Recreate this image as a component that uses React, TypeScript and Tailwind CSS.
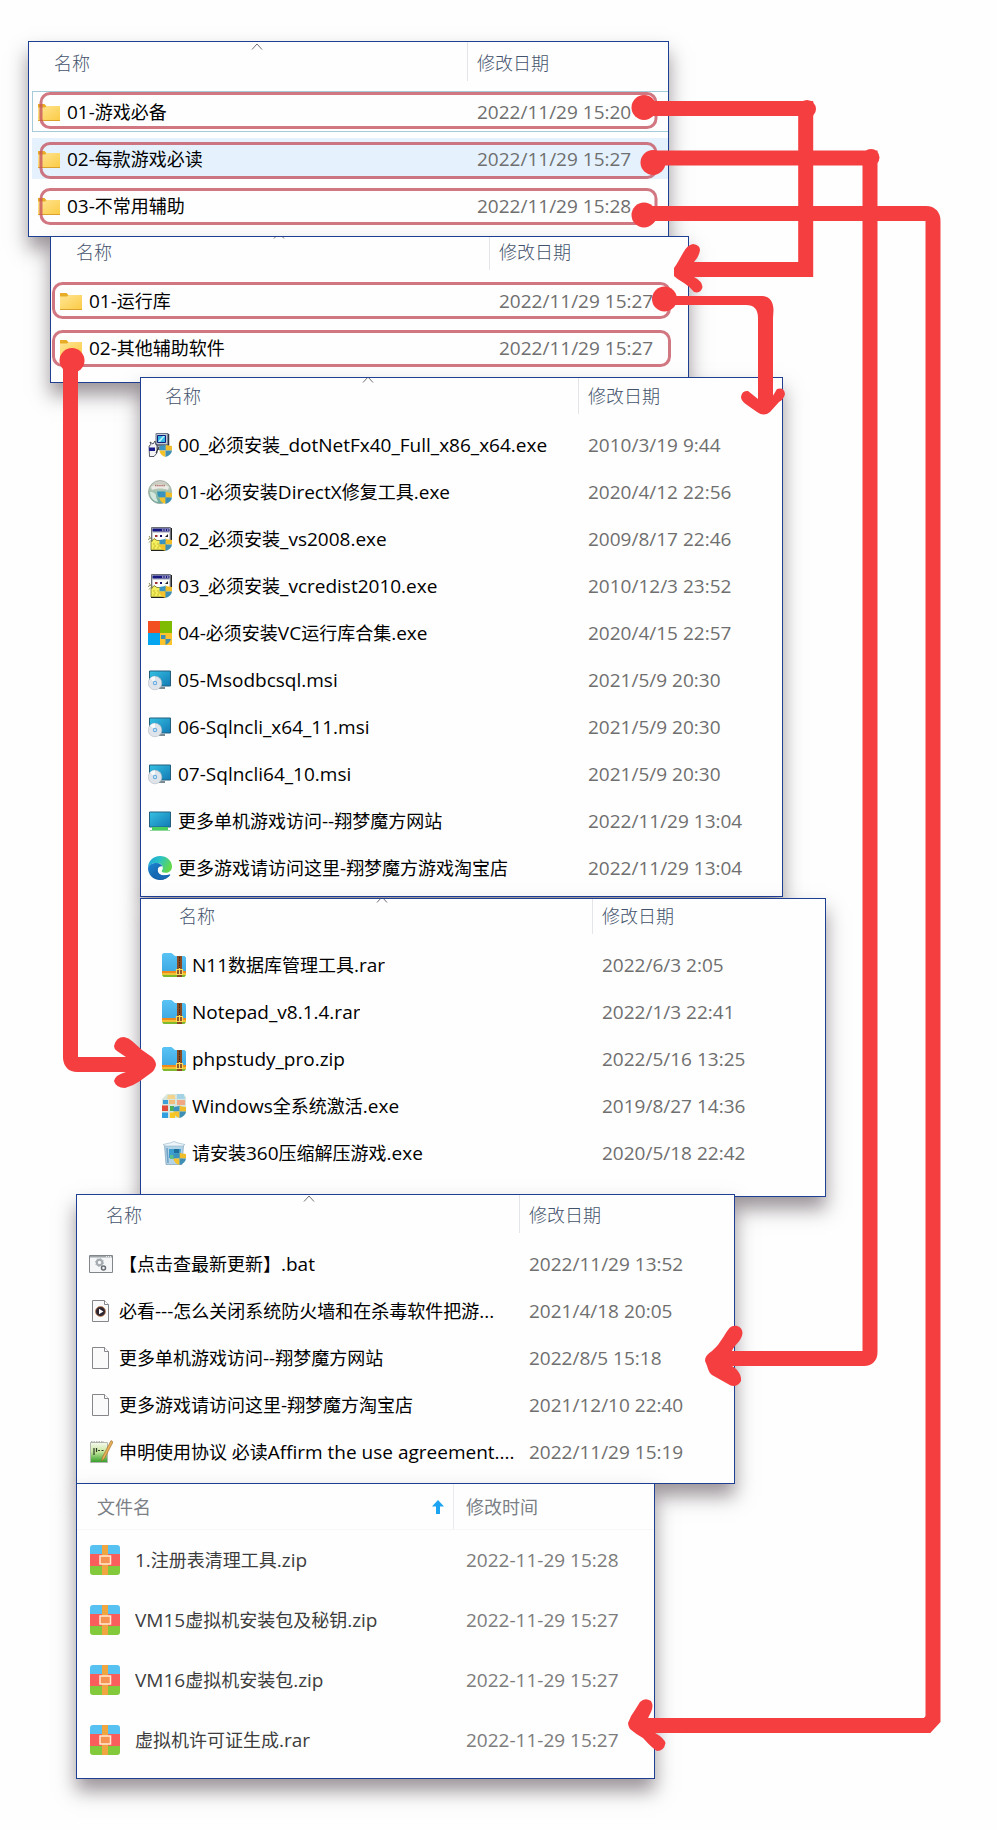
import clsx from "clsx";
import type { ReactNode } from "react";

type FileItem = {
  name: string;
  date: string;
  icon: ReactNode;
  state?: "focused" | "hovered";
};

type WindowProps = {
  items: FileItem[];
  className: string;
  headClassName: string;
  rowClassName: string;
};

function Shield() {
  return (
    <g>
      <path d="M17.500 11.500c2 1 4 1.400 6.500 1.400v4.600h-6.500z" fill="#f0bd2a" />
      <path d="M17.500 11.500c-2 1-3.500 1.400-6 1.400v4.600h6z" fill="#3a93c0" />
      <path d="M11.500 17.500h6V24c-3.600-1.200-5.800-3.300-6-6.500z" fill="#f5c22b" />
      <path d="M24 17.500h-6.500V24c3.600-1.200 6.200-3.300 6.500-6.500z" fill="#3f8fb5" />
    </g>
  );
}

function FolderIcon() {
  return (
    <svg viewBox="0 0 24 24" className="size-6">
      <defs>
        <linearGradient id="folder" x1="0" y1="0" x2="1" y2="1">
          <stop offset="0" stopColor="#ffe594" />
          <stop offset="1" stopColor="#fbcb45" />
        </linearGradient>
      </defs>
      <path d="M1 4h6.500l1.800 2H23v5H1z" fill="#e9ac27" />
      <path d="M1 7.500h7L9.500 6H23v14.500H1z" fill="url(#folder)" />
      <path d="M1 20h22v1H1z" fill="#dba32e" />
    </svg>
  );
}

function SetupIcon() {
  return (
    <svg viewBox="0 0 24 24" className="size-6">
      <path d="M8 .5h12v11H8z" fill="#c4cbd6" stroke="#6c7686" />
      <path d="M20.500 1v11" stroke="#2f3747" strokeWidth="1.500" />
      <path d="M9.500 2.500h8v7h-8z" fill="#35b5e6" stroke="#10207a" />
      <path d="M10 8.500l5-5.500h2l-5 6z" fill="#b6f0f7" />
      <path d="M9 12.500h12v4H9z" fill="#a7aebb" stroke="#4f5766" strokeWidth=".8" />
      <path d="M1 13l2-1.500L2 9l3 2 2-3 1 4h1v8l-3 3.500H1.500z" fill="#f3f3f6" stroke="#2c3040" strokeWidth=".8" />
      <path d="M1 14.500h6V18H1z" fill="#1b1c8c" />
      <path d="M8 20l3-6" stroke="#222" />
      <Shield />
    </svg>
  );
}

function DirectXIcon() {
  return (
    <svg viewBox="0 0 24 24" className="size-6">
      <defs>
        <linearGradient id="globe" x1="0" y1="0" x2="0" y2="1">
          <stop offset="0" stopColor="#d5d2ca" />
          <stop offset=".35" stopColor="#b4c9b6" />
          <stop offset="1" stopColor="#62a99c" />
        </linearGradient>
      </defs>
      <circle cx="12" cy="12" r="11.500" fill="url(#globe)" stroke="#9aa49b" strokeWidth=".8" />
      <path d="M3 7c5-4 13-4 18 0l-1 3c-5-2-11-2-16 0z" fill="#eceae4" />
      <path d="M7 5.500h10" stroke="#b0706c" strokeWidth="1.500" strokeDasharray="1.500 .6" />
      <path d="M2 12c4 0 6 2 6 4s1 3 2 6c-5-1-8-5-8-10z" fill="#d5e8dd" />
      <path d="M9 11.500h8l-3 6-4-1z" fill="#2f93b4" />
      <Shield />
    </svg>
  );
}

function InstallerIcon() {
  return (
    <svg viewBox="0 0 24 24" className="size-6">
      <path d="M3.500.5h19v14h-19z" fill="#c9ccd0" stroke="#6b7078" />
      <path d="M23.500 1v14" stroke="#222" />
      <path d="M4.500 1.500h17v3h-17z" fill="#14157e" />
      <path d="M14 3h1.500m1 0H18m1 0h1.500" stroke="#fff" />
      <path d="M5 6h16v8H5z" fill="#fdfdfd" />
      <path d="M7 8h2.500v2H7z" fill="#a03030" />
      <path d="M12 8h2v2h-2z" fill="#12126e" />
      <path d="M17 10l3-3v3z" fill="#222" />
      <path d="M0 12.500l2-1m-1 4 3-3M1 9l2 3" stroke="#8a8c4a" />
      <path d="M3 15.500l3-4 3 2h9v9.500H3z" fill="#f2ee5e" stroke="#76751e" strokeWidth=".8" />
      <path d="M5 17h2m2 0h2m-5 2h2m2 0h2m-7 2h2m2 0h2" stroke="#c9b92b" />
      <path d="M3 23.500h14" stroke="#222" />
      <Shield />
    </svg>
  );
}

function WindowsIcon() {
  return (
    <svg viewBox="0 0 24 24" className="size-6">
      <path d="M0 0h12v12H0z" fill="#f35022" />
      <path d="M12 0h12v12H12z" fill="#80bb03" />
      <path d="M0 12h12v12H0z" fill="#05a5f0" />
      <path d="M12 12h12v12H12z" fill="#ffc42b" />
      <path d="M13 14h4.500v4H13zM17.500 18H23c-1 3-3 5-5.500 6z" fill="#3f8fb5" />
    </svg>
  );
}

function Screen() {
  return (
    <>
      <defs>
        <linearGradient id="screen" x1="0" y1="0" x2="1" y2="1">
          <stop offset="0" stopColor="#35c1e3" />
          <stop offset="1" stopColor="#1279b4" />
        </linearGradient>
      </defs>
      <path d="M1.500 3h21v15h-21z" fill="url(#screen)" stroke="#24607e" />
    </>
  );
}

function MsiIcon() {
  return (
    <svg viewBox="0 0 24 24" className="size-6">
      <Screen />
      <path d="M11 20h6" stroke="#4f6470" strokeWidth="1.500" />
      <circle cx="7" cy="15" r="6.800" fill="#dfe3ea" stroke="#b3bac3" strokeWidth=".6" />
      <path d="M7 15 2 10.500A7 7 0 0 1 7 8.300z" fill="#f7f9fb" />
      <circle cx="7" cy="15" r="2.200" fill="#6aaee0" />
      <circle cx="7" cy="15" r="1" fill="#e9f4fb" />
    </svg>
  );
}

function ShortcutIcon() {
  return (
    <svg viewBox="0 0 24 24" className="size-6">
      <Screen />
      <path d="M4 18h16v4H4z" fill="#48cf5f" />
      <path d="M2 21.500h20" stroke="#8fd79a" />
    </svg>
  );
}

function EdgeIcon() {
  return (
    <svg viewBox="0 0 24 24" className="size-6">
      <defs>
        <linearGradient id="edge-top" x1="0" y1="0" x2="1" y2=".4">
          <stop offset="0" stopColor="#1c9de0" />
          <stop offset=".5" stopColor="#2bc3c4" />
          <stop offset="1" stopColor="#62d84e" />
        </linearGradient>
        <linearGradient id="edge-low" x1="0" y1="0" x2="1" y2="1">
          <stop offset="0" stopColor="#1b87d6" />
          <stop offset="1" stopColor="#114a8b" />
        </linearGradient>
      </defs>
      <path
        d="M0 12C0 5 5 0 12 0s12 5 12 10.500c0 4-3 6.300-6.500 6.300-3 0-4-1-3.700-2 .2-.7 1-1.200 1-3 0-2.500-2.300-4.800-6-4.800C4 7 1 9 0 12z"
        fill="url(#edge-top)"
      />
      <path
        d="M0 12c1-3.500 4-5 8.800-5 3 0 5.200 1.800 5.800 3.700-1-.9-4.600-.5-5 3.300-.3 4 4 7.500 12.400 4.500-2 3.500-5.500 5.500-10 5.500C5 24 0 18.500 0 12z"
        fill="url(#edge-low)"
      />
      <path d="M9.700 13c-.7 4 3.300 8 11.800 5.500.7-.2 1.100.3.700.8C19 23.300 13 24.500 9 22.700 5.500 20 5.500 15 9.700 13z" fill="#1769b4" />
    </svg>
  );
}

function ArchiveFolderIcon() {
  return (
    <svg viewBox="0 0 24 24" className="size-6">
      <defs>
        <linearGradient id="archive" x1="0" y1="0" x2="0" y2="1">
          <stop offset="0" stopColor="#59c3f5" />
          <stop offset="1" stopColor="#3aa5e0" />
        </linearGradient>
      </defs>
      <path d="M1.500 0h8L13 3h9.500L24 4.500V22H0V1.500z" fill="url(#archive)" />
      <path d="M0 18h24v2H0z" fill="#f08a1d" />
      <path d="M0 20h24v2H0z" fill="#f3c234" />
      <path d="M0 22h24l-1.500 2h-21z" fill="#7fb92e" />
      <path d="M15 3h5v21h-5z" fill="#8a4a22" />
      <path d="M17.500 4v12" stroke="#3d2416" strokeDasharray="1.500 1" />
      <path d="M14.500 16.500h6v5h-6zM17.500 15v6" fill="none" stroke="#ffd95a" strokeWidth="1.200" />
    </svg>
  );
}

function ActivatorIcon() {
  return (
    <svg viewBox="0 0 24 24" className="size-6">
      <path d="M5 0h16l3 3v16l-5 5H0V5z" fill="#d7e6dc" />
      <path d="M6 1h7v4H5z" fill="#f3d48a" />
      <path d="M15 0h7l1 5h-8z" fill="#a3d3e4" />
      <path d="M1 6h5v4H1z" fill="#3f9fd9" />
      <path d="M7 6h6v4H7z" fill="#f3bd7a" />
      <path d="M15 6h8v5h-8z" fill="#f0a884" />
      <path d="M0 11.500h6V17H0z" fill="#e24a3a" />
      <path d="M8 12h4v5H8z" fill="#4faf56" />
      <path d="M0 18.500h6V24H0z" fill="#2f9fe0" />
      <path d="M8 18.500h5V24H8z" fill="#f7c81f" />
      <Shield />
    </svg>
  );
}

function CompressIcon() {
  return (
    <svg viewBox="0 0 24 24" className="size-6">
      <path d="M2.500 4h19L20 23.500H4z" fill="#b3d3e6" stroke="#7c9fb8" strokeWidth=".7" />
      <path d="M1 3.500 8 2l4-1.500L16 2l7 1.500L21 5H3z" fill="#eef5f9" stroke="#93b4c7" strokeWidth=".6" />
      <path d="M7 8h12l-1 9H7z" fill="#3d9fd0" />
      <path d="M12 8h5v4h-5z" fill="#1d6f9c" />
      <path d="M8 14h5v4H8z" fill="#5cbf8c" />
      <path d="M5 7l1 15" stroke="#6f9fc4" strokeWidth="1.500" />
      <Shield />
    </svg>
  );
}

function BatIcon() {
  return (
    <svg viewBox="0 0 24 24" className="size-6">
      <path d="M.5 3.500h23v17H.5z" fill="#f5f6f7" stroke="#82868b" />
      <path d="M1 4h22v1.500H1z" fill="#9fa4a9" />
      <path d="M17 4.700h5" stroke="#fff" strokeDasharray="1 1" />
      <circle cx="10.500" cy="10.500" r="2.700" fill="none" stroke="#a4abb1" strokeWidth="2" />
      <circle cx="10.500" cy="10.500" r="4" fill="none" stroke="#a4abb1" strokeDasharray="1.500 1.600" />
      <circle cx="14.500" cy="16" r="2" fill="none" stroke="#676d73" strokeWidth="1.500" />
    </svg>
  );
}

function PageIcon({ children }: { children?: ReactNode }) {
  return (
    <svg viewBox="0 0 24 24" className="size-6">
      <path d="M3.500 1.500h12l4 4v17h-16z" fill="#fafafa" stroke="#84868a" />
      <path d="M15.500 1.500v4h4" fill="#fff" stroke="#84868a" />
      {children}
    </svg>
  );
}

function VideoIcon() {
  return (
    <PageIcon>
      <circle cx="11.500" cy="12.500" r="5" fill="#2d2530" stroke="#c98659" strokeWidth=".8" />
      <path d="M10 9.800v5.400l4.400-2.700z" fill="#fff" />
    </PageIcon>
  );
}

function NotepadIcon() {
  return (
    <svg viewBox="0 0 24 24" className="size-6">
      <defs>
        <linearGradient id="note" x1="0" y1="0" x2="0" y2="1">
          <stop offset="0" stopColor="#f6f8ee" />
          <stop offset=".45" stopColor="#c9e8a0" />
          <stop offset="1" stopColor="#2f9c27" />
        </linearGradient>
      </defs>
      <path d="M1.500 2.500h17v20h-17z" fill="url(#note)" stroke="#b3b8b0" />
      <path d="M2 2h13" stroke="#a5a9a3" strokeWidth="1.500" strokeDasharray="1.500 1" />
      <path d="M5 8v7M7.500 8v4M9 10.500h2m1.500 0h2" stroke="#2c3a24" strokeWidth="1.200" />
      <path d="M22 .5 13.500 17l-1 4 3-2.500L24 2z" fill="#e8b05a" stroke="#9a6a22" strokeWidth=".6" />
    </svg>
  );
}

function ZipIcon() {
  return (
    <svg viewBox="0 0 30 30" className="size-[30px]">
      <path d="M3 0h24a3 3 0 0 1 3 3v6H0V3a3 3 0 0 1 3-3z" fill="#57c1f2" />
      <path d="M0 9h30v12H0z" fill="#fa5e5c" />
      <path d="M0 21h30v6a3 3 0 0 1-3 3H3a3 3 0 0 1-3-3z" fill="#82c93c" />
      <path d="M12 0h6v30h-6z" fill="#f0a640" />
      <path d="M10 11h10.500v8H10z" fill="#f79352" stroke="#ffe9d2" strokeWidth="1.500" />
    </svg>
  );
}

const rootFiles: FileItem[] = [
  { name: "01-游戏必备", date: "2022/11/29 15:20", icon: <FolderIcon />, state: "focused" },
  { name: "02-每款游戏必读", date: "2022/11/29 15:27", icon: <FolderIcon />, state: "hovered" },
  { name: "03-不常用辅助", date: "2022/11/29 15:28", icon: <FolderIcon /> },
];

const essentialFiles: FileItem[] = [
  { name: "01-运行库", date: "2022/11/29 15:27", icon: <FolderIcon /> },
  { name: "02-其他辅助软件", date: "2022/11/29 15:27", icon: <FolderIcon /> },
];

const runtimeFiles: FileItem[] = [
  { name: "00_必须安装_dotNetFx40_Full_x86_x64.exe", date: "2010/3/19 9:44", icon: <SetupIcon /> },
  { name: "01-必须安装DirectX修复工具.exe", date: "2020/4/12 22:56", icon: <DirectXIcon /> },
  { name: "02_必须安装_vs2008.exe", date: "2009/8/17 22:46", icon: <InstallerIcon /> },
  { name: "03_必须安装_vcredist2010.exe", date: "2010/12/3 23:52", icon: <InstallerIcon /> },
  { name: "04-必须安装VC运行库合集.exe", date: "2020/4/15 22:57", icon: <WindowsIcon /> },
  { name: "05-Msodbcsql.msi", date: "2021/5/9 20:30", icon: <MsiIcon /> },
  { name: "06-Sqlncli_x64_11.msi", date: "2021/5/9 20:30", icon: <MsiIcon /> },
  { name: "07-Sqlncli64_10.msi", date: "2021/5/9 20:30", icon: <MsiIcon /> },
  { name: "更多单机游戏访问--翔梦魔方网站", date: "2022/11/29 13:04", icon: <ShortcutIcon /> },
  { name: "更多游戏请访问这里-翔梦魔方游戏淘宝店", date: "2022/11/29 13:04", icon: <EdgeIcon /> },
];

const toolFiles: FileItem[] = [
  { name: "N11数据库管理工具.rar", date: "2022/6/3 2:05", icon: <ArchiveFolderIcon /> },
  { name: "Notepad_v8.1.4.rar", date: "2022/1/3 22:41", icon: <ArchiveFolderIcon /> },
  { name: "phpstudy_pro.zip", date: "2022/5/16 13:25", icon: <ArchiveFolderIcon /> },
  { name: "Windows全系统激活.exe", date: "2019/8/27 14:36", icon: <ActivatorIcon /> },
  { name: "请安装360压缩解压游戏.exe", date: "2020/5/18 22:42", icon: <CompressIcon /> },
];

const readmeFiles: FileItem[] = [
  { name: "【点击查最新更新】.bat", date: "2022/11/29 13:52", icon: <BatIcon /> },
  { name: "必看---怎么关闭系统防火墙和在杀毒软件把游...", date: "2021/4/18 20:05", icon: <VideoIcon /> },
  { name: "更多单机游戏访问--翔梦魔方网站", date: "2022/8/5 15:18", icon: <PageIcon /> },
  { name: "更多游戏请访问这里-翔梦魔方淘宝店", date: "2021/12/10 22:40", icon: <PageIcon /> },
  { name: "申明使用协议 必读Affirm the use agreement....", date: "2022/11/29 15:19", icon: <NotepadIcon /> },
];

const rareFiles: FileItem[] = [
  { name: "1.注册表清理工具.zip", date: "2022-11-29 15:28", icon: <ZipIcon /> },
  { name: "VM15虚拟机安装包及秘钥.zip", date: "2022-11-29 15:27", icon: <ZipIcon /> },
  { name: "VM16虚拟机安装包.zip", date: "2022-11-29 15:27", icon: <ZipIcon /> },
  { name: "虚拟机许可证生成.rar", date: "2022-11-29 15:27", icon: <ZipIcon /> },
];

const windowClassName =
  "relative w-full border border-[#1f3f93] bg-[#fefefe] shadow-[0_12px_18px_rgba(60,45,55,0.5)]";

// Latin runs are set one pixel larger than the Chinese around them.
function FileName({ name }: { name: string }) {
  const parts = name.split(/([\x21-\x7e][\x20-\x7e]*)/).filter(Boolean);

  return (
    <span className="truncate whitespace-pre">
      {parts.map((part, index) =>
        /^[\x21-\x7e]/.test(part) ? (
          <span key={index} className="text-[19px]">
            {part}
          </span>
        ) : (
          part
        ),
      )}
    </span>
  );
}

function ExplorerWindow({ items, className, headClassName, rowClassName }: WindowProps) {
  return (
    <section className={clsx(windowClassName, className)}>
      <table className="block">
        <thead className={clsx("flex flex-col justify-end overflow-hidden", headClassName)}>
          <tr className={clsx("flex h-[49px] shrink-0 text-left text-[18px] leading-[42px] text-[#44536c]", rowClassName)}>
            <th className="relative ml-[9px] h-[39px] w-[422px] border-r border-[#e3e5e8] pl-2 font-light">
              名称
              <svg viewBox="0 0 12 7" className="absolute inset-x-0 top-[1px] mx-auto h-[7px] w-3">
                <path d="M1 6.500 6 1l5 5.500" fill="none" stroke="#6b6f76" />
              </svg>
            </th>
            <th className="pl-[9px] font-light">修改日期</th>
          </tr>
        </thead>
        <tbody className="flex flex-col gap-[6px]">
          {items.map((item) => (
            <tr
              key={item.name}
              className={clsx(
                "relative flex h-[41px] items-center leading-6",
                rowClassName,
                item.state === "focused" && "shadow-[inset_0_1px_#a5cbd9,inset_0_-1px_#a5cbd9,inset_1px_0_#a5cbd9]",
                item.state === "hovered" && "bg-[#e5f2fd]",
              )}
            >
              <td className="flex w-[440px] items-center gap-[6px] text-[18px] text-black">
                <span className="size-6 shrink-0">{item.icon}</span>
                <FileName name={item.name} />
              </td>
              <td className="text-[19px] whitespace-nowrap text-[#6f6f6f]">{item.date}</td>
            </tr>
          ))}
        </tbody>
      </table>
    </section>
  );
}

function ArchiveWindow({ items }: { items: FileItem[] }) {
  return (
    <section className={clsx(windowClassName, "-mt-px ml-[76px] max-w-[579px] pb-2")}>
      <table className="block">
        <thead className="block">
          <tr className="flex h-[46px] border-b border-[#f7f7f8] text-left text-[18px] leading-[46px] text-[#7b7f86]">
            <th className="flex w-[377px] items-center justify-between border-r border-[#e9ebee] pr-[9px] pl-5 font-normal">
              文件名
              <svg viewBox="0 0 12 14" className="h-[14px] w-3">
                <path d="M6 0l6 6.500H8V14H4V6.500H0z" fill="#1ca4f2" />
              </svg>
            </th>
            <th className="pl-3 font-normal">修改时间</th>
          </tr>
        </thead>
        <tbody className="block">
          {items.map((item) => (
            <tr key={item.name} className="flex h-[60px] items-center pl-[13px] leading-6">
              <td className="flex w-[376px] items-center gap-[15px] text-[18px] text-[#3d3d3d]">
                <span className="shrink-0">{item.icon}</span>
                <FileName name={item.name} />
              </td>
              <td className="text-[19px] whitespace-nowrap text-[#7c7c7c]">{item.date}</td>
            </tr>
          ))}
        </tbody>
      </table>
    </section>
  );
}

function Annotations() {
  return (
    <svg
      viewBox="0 0 997 1830"
      className="pointer-events-none absolute top-0 left-0 h-[1830px] w-[997px] max-w-none"
      aria-hidden="true"
    >
      <g fill="none" stroke="#c4515f" strokeOpacity=".78" strokeWidth="3">
        <rect x="41" y="93.500" width="615" height="34" rx="9" />
        <rect x="41" y="143.500" width="615" height="34" rx="9" />
        <rect x="41" y="189.500" width="615" height="34" rx="9" />
        <rect x="53.500" y="283.500" width="616" height="34" rx="9" />
        <rect x="53.500" y="331.500" width="616" height="34" rx="9" />
      </g>
      <g fill="#f43e40">
        <circle cx="644" cy="107.500" r="12.500" />
        <circle cx="653" cy="162.500" r="12.500" />
        <circle cx="644" cy="215" r="12.500" />
        <circle cx="664.500" cy="299" r="12.500" />
        <circle cx="72" cy="360.500" r="12.500" />
        <circle cx="807" cy="109" r="9" />
        <circle cx="871" cy="157.500" r="8.500" />
      </g>
      <g fill="none" stroke="#f43e40" strokeWidth="15">
        <path d="M644 108.500H805.700V269.500H688" />
        <path d="M653 158H870V1352Q870 1358.500 864 1358.500H720" />
        <path d="M644 213.500H926Q933 213.500 933 221V1719L927 1725.500H640" />
        <path d="M765.500 310V404" />
        <path d="M70.500 360V1058Q71 1064.500 77 1064.500H140" />
      </g>
      <path d="M664 296H763Q773 297 773.500 310L773 318H758Q758 305 746 305H664z" fill="#f43e40" />
      {/* arrow heads */}
      <g fill="#f43e40">
        <path d="M674 276V268C677 264 680 258 683 253Q687 245 693 244Q700 245 700 250Q699 257 694 262V277Q702 281 702.500 287Q701 294 694 292Q689 286 684 283Q677 279 674 276z" />
        <path d="M728 1330C731 1324 742 1324 742.500 1333C742 1341 734 1345 732 1351V1366C736 1368 742 1374 741 1381C738 1387 732 1387 728 1384L712 1375C708 1372 708 1367 705 1361C705 1354 712 1352 714 1349C720 1344 724 1335 728 1330z" />
        <path d="M628 1723Q631 1715 635 1710L640 1702Q645 1697 651 1701Q654 1706 651 1712L648 1718V1733H655Q664 1738 665.500 1743Q664 1751 657 1751Q652 1748 643 1738Q637 1735 630 1729Q628 1726 628 1723z" />
        <path d="M741 397Q742 390 748 391L758 399H771L777 389Q784 387 785 394Q784 399 779 402L770 412Q764 417 757 412L747 405Q741 401 741 397z" />
        <path d="M114 1046Q116 1037 124 1037Q129 1038 132 1041L142 1050L152 1057Q156 1061 156 1065Q155 1070 151 1073L140 1081Q133 1086 125 1088Q116 1088 114 1081Q115 1075 126 1072V1057L117 1051Q114 1049 114 1046z" />
      </g>
    </svg>
  );
}

export default function App() {
  return (
    <main className="relative flow-root overflow-hidden bg-[#fefefe] pt-[41px] pb-[51px] font-['Open_Sans','Noto_Sans_CJK_SC',sans-serif]">
      <ExplorerWindow
        items={rootFiles}
        className="ml-7 max-w-[641px] pb-[10px]"
        headClassName="h-[49px]"
        rowClassName="ml-[3px] pl-[5px]"
      />
      <ExplorerWindow
        items={essentialFiles}
        className="-mt-px ml-[50px] max-w-[639px] pb-[14px]"
        headClassName="h-[43px]"
        rowClassName="pl-2"
      />
      <ExplorerWindow
        items={runtimeFiles}
        className="-mt-[6px] ml-[140px] max-w-[643px] pb-2"
        headClassName="h-[46px]"
        rowClassName="pl-[7px]"
      />
      <ExplorerWindow
        items={toolFiles}
        className="mt-px ml-[140px] max-w-[686px] pb-[23px]"
        headClassName="h-[45px]"
        rowClassName="pl-[21px]"
      />
      <ExplorerWindow
        items={readmeFiles}
        className="-mt-[3px] ml-[76px] max-w-[659px] pb-[11px]"
        headClassName="h-12"
        rowClassName="pl-3"
      />
      <ArchiveWindow items={rareFiles} />
      <Annotations />
    </main>
  );
}
